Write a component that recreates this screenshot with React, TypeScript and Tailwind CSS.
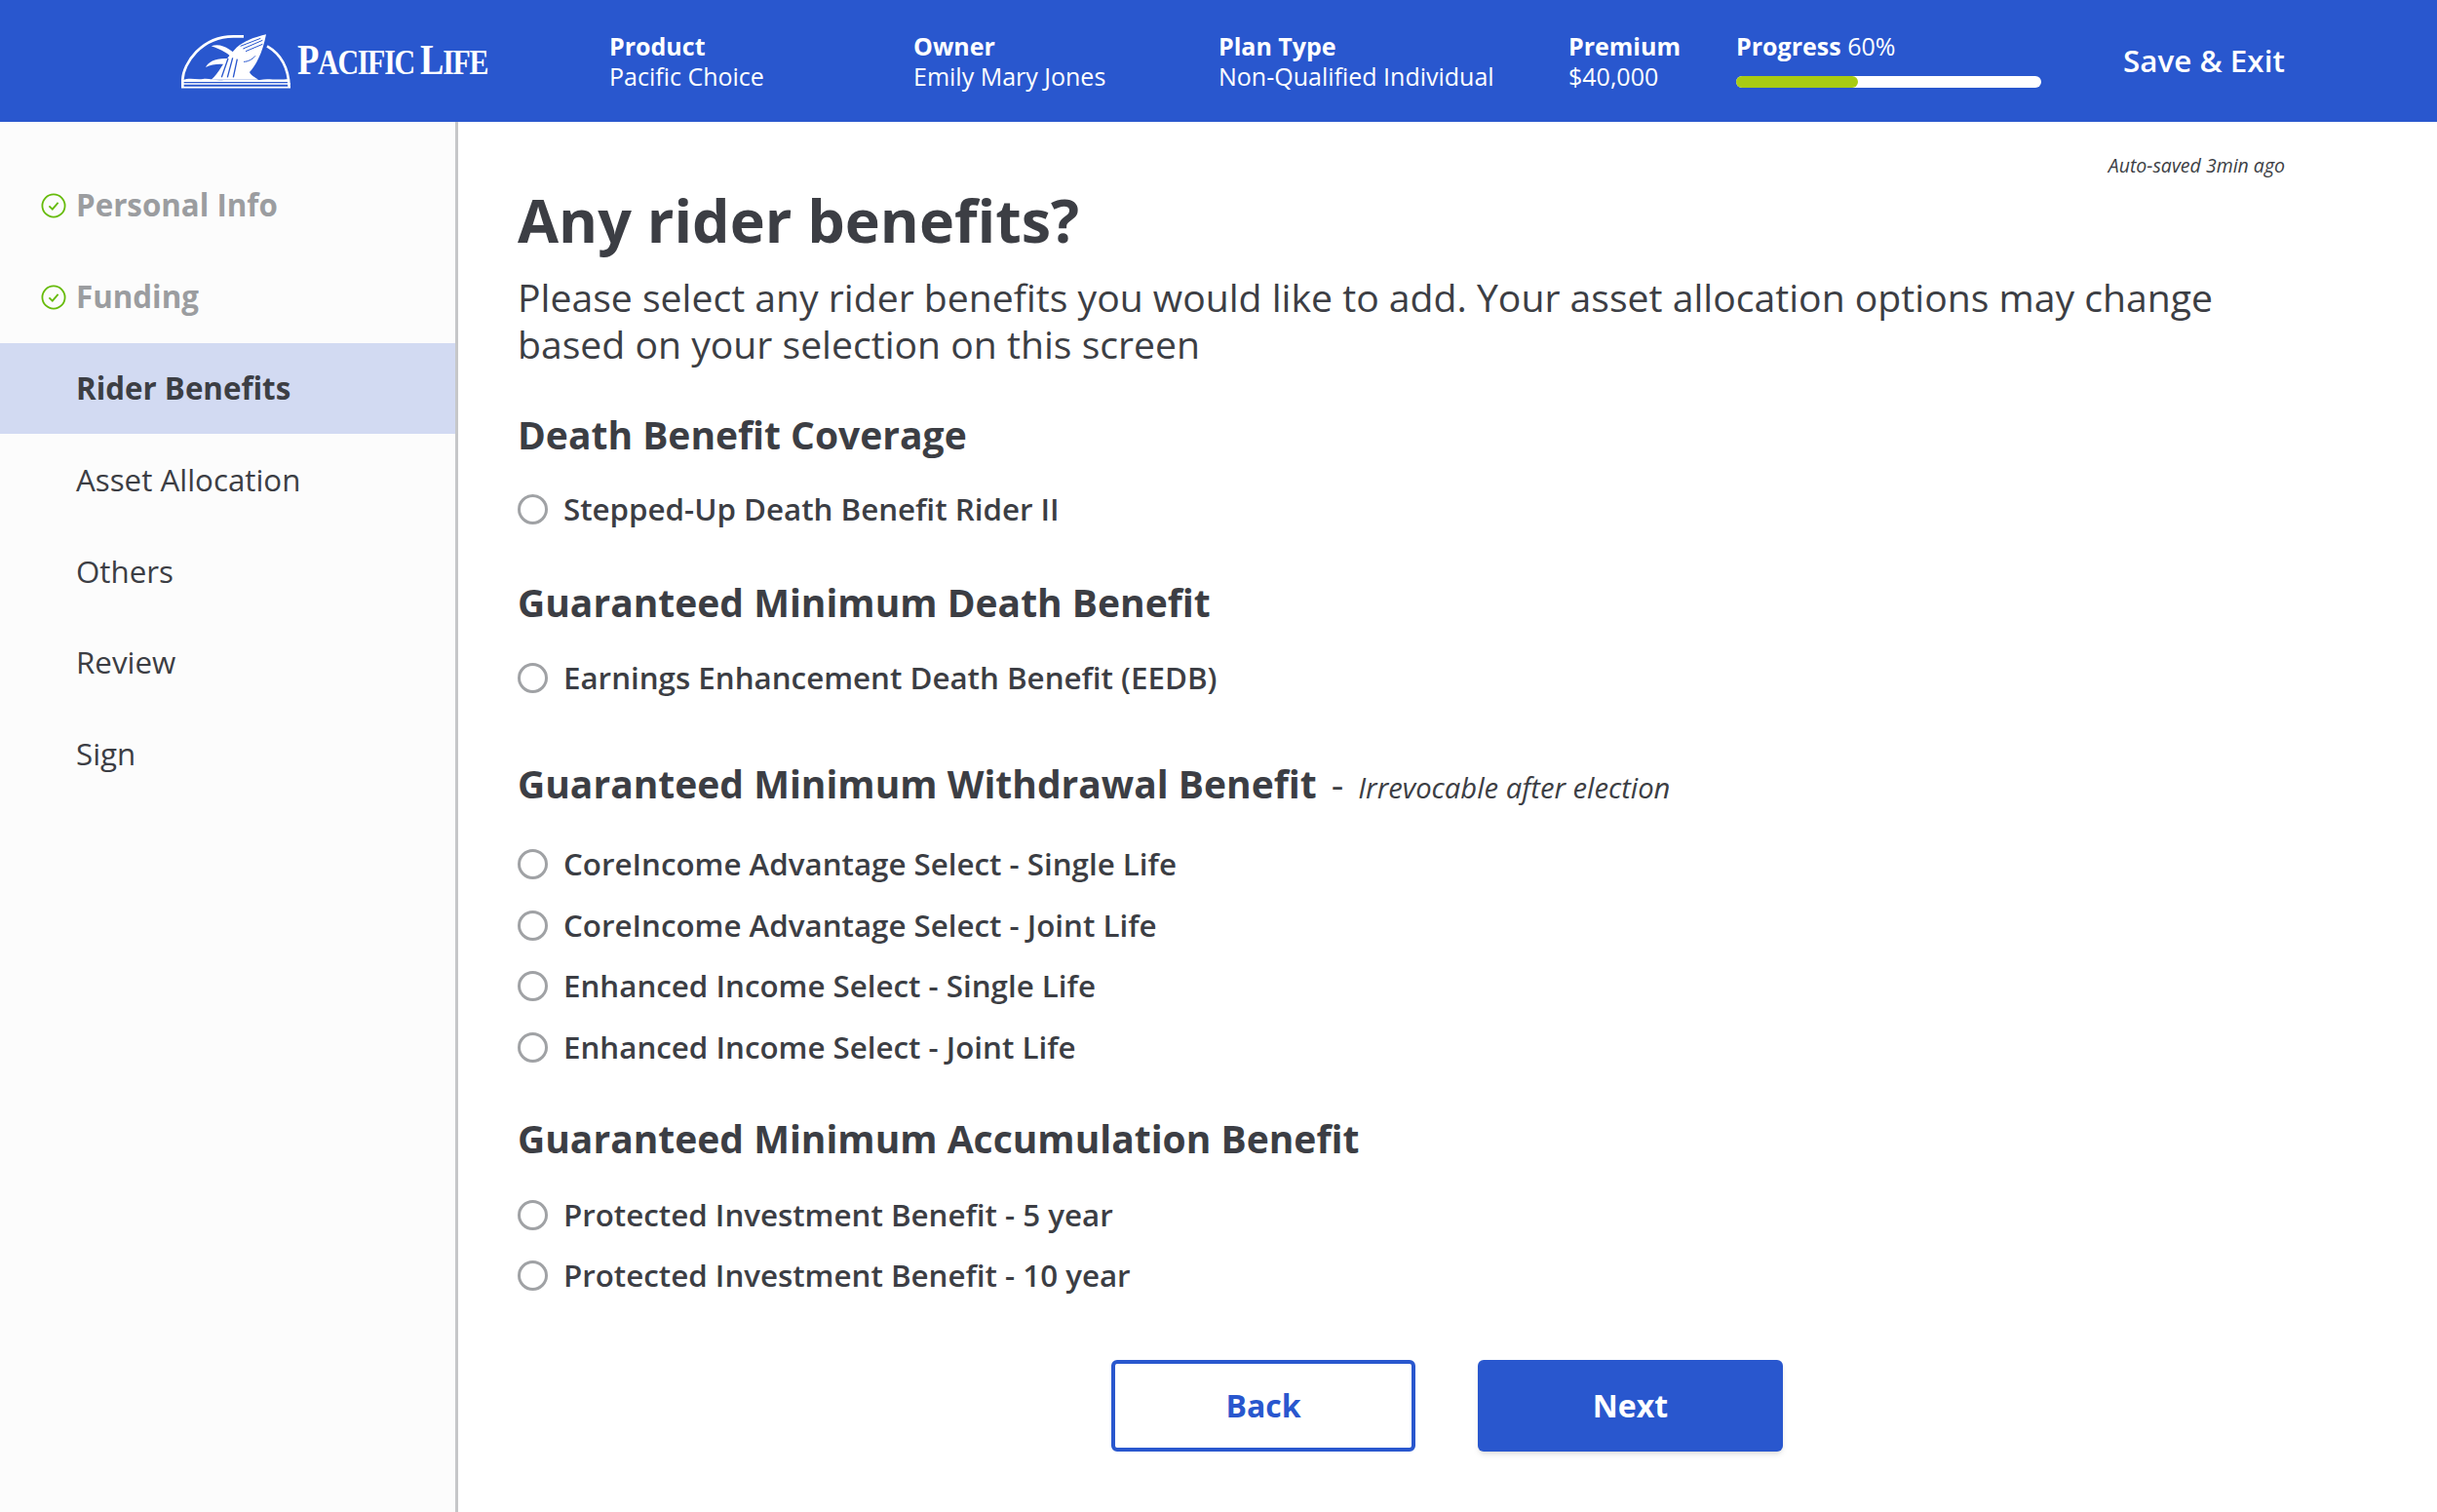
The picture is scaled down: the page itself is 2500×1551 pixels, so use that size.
import React from "react";

const navDone = ["Personal Info", "Funding"];
const navTodo = ["Asset Allocation", "Others", "Review", "Sign"];

const headerInfo = [
  { label: "Product", value: "Pacific Choice", width: "w-[312px]" },
  { label: "Owner", value: "Emily Mary Jones", width: "w-[313px]" },
  { label: "Plan Type", value: "Non-Qualified Individual", width: "w-[359px]" },
  { label: "Premium", value: "$40,000", width: "w-[172px]" },
];

const sections = [
  {
    title: "Death Benefit Coverage",
    sectionClass: "",
    listClass: "mt-[24px]",
    options: ["Stepped-Up Death Benefit Rider II"],
  },
  {
    title: "Guaranteed Minimum Death Benefit",
    sectionClass: "mt-[42px]",
    listClass: "mt-[24px]",
    options: ["Earnings Enhancement Death Benefit (EEDB)"],
  },
  {
    title: "Guaranteed Minimum Withdrawal Benefit",
    note: "Irrevocable after election",
    sectionClass: "mt-[55.5px]",
    listClass: "mt-[29.5px]",
    options: [
      "CoreIncome Advantage Select - Single Life",
      "CoreIncome Advantage Select - Joint Life",
      "Enhanced Income Select - Single Life",
      "Enhanced Income Select - Joint Life",
    ],
  },
  {
    title: "Guaranteed Minimum Accumulation Benefit",
    sectionClass: "mt-[40.5px]",
    listClass: "mt-[25px]",
    options: ["Protected Investment Benefit - 5 year", "Protected Investment Benefit - 10 year"],
  },
];

function Logo() {
  return (
    <div className="flex items-center w-[314px] h-[56px] shrink-0">
      <svg width="112" height="56" viewBox="108 105 336 168" fill="none" className="shrink-0">
        {/* dome */}
        <path d="M112 268 V245 C114 195 170 112 268 112 L300 112" stroke="#fff" strokeWidth="8" />
        <path d="M372 142 C412 165 438 205 440 268" stroke="#fff" strokeWidth="8" />
        {/* whale body */}
        <path
          d="M369 106 C345 112 305 122 278 146 C262 162 245 185 232 205 C222 222 212 235 200 245 L345 245 C335 238 322 232 318 222 C335 205 358 165 369 106 Z"
          fill="#fff"
        />
        {/* fins */}
        <path d="M200 142 C230 130 262 150 296 188 L272 186 C255 165 230 152 200 142 Z" fill="#fff" />
        <path d="M183 207 C190 190 215 178 250 180 L240 198 C222 196 200 198 183 207 Z" fill="#fff" />
        {/* belly and back lines */}
        <path d="M290 142 L352 118 M298 150 L358 124 M306 158 L358 136" stroke="#2957ce" strokeWidth="3" />
        <path d="M252 180 L232 238 M266 178 L250 238 M280 182 L268 238" stroke="#2957ce" strokeWidth="4" />
        <path d="M300 190 C312 190 325 184 336 172" stroke="#2957ce" strokeWidth="3" />
        {/* water */}
        <path
          d="M112 247 C135 238 150 246 175 243 C195 240 210 250 240 246 L350 246 C375 240 395 248 440 243 V252 H112 Z"
          fill="#fff"
        />
        <path d="M108 258 H444 M108 269 H444" stroke="#fff" strokeWidth="5" />
      </svg>
      <div
        className="ml-[7px] text-white font-bold whitespace-nowrap tracking-[-1.5px] leading-none mt-[-1px] origin-left scale-x-[.83]"
        style={{ fontFamily: '"Liberation Serif", serif' }}
      >
        <span className="text-[44px]">P</span>
        <span className="text-[36px]">ACIFIC </span>
        <span className="text-[44px]">L</span>
        <span className="text-[36px]">IFE</span>
      </div>
    </div>
  );
}

function CheckIcon() {
  return (
    <svg width="26" height="26" viewBox="0 0 26 26" fill="none" className="shrink-0">
      <circle cx="13" cy="13" r="11.6" stroke="#66bb0a" strokeWidth="1.8" />
      <path d="M8.4 13.4 L11.8 16.6 L17.6 9.8" stroke="#66bb0a" strokeWidth="1.8" />
    </svg>
  );
}

function Sidebar() {
  return (
    <aside className="w-[470px] shrink-0 border-r-[3px] border-[#c6c7c9] bg-[#fcfcfc] pt-[39px] text-[31.3px]">
      {navDone.map((item) => (
        <div key={item} className="flex items-center h-[93.8px] pl-[42px] gap-[10px] font-bold text-[#9b9da0]">
          <CheckIcon />
          <span>{item}</span>
        </div>
      ))}
      <div className="flex items-center h-[93.8px] pl-[78px] font-bold text-[#3c3e44] bg-[#d2daf2]">Rider Benefits</div>
      {navTodo.map((item) => (
        <div key={item} className="flex items-center h-[93.8px] pl-[78px] text-[#3c3e44]">
          {item}
        </div>
      ))}
    </aside>
  );
}

export default function App() {
  return (
    <div
      className="w-[2500px] h-[1551px] overflow-hidden bg-white flex flex-col text-[#3c3e44]"
      style={{ fontFamily: '"Open Sans", sans-serif' }}
    >
      {/* header */}
      <header className="h-[125px] shrink-0 bg-[#2957ce] flex items-center pl-[186px] text-white">
        <div className="w-[439px] shrink-0">
          <Logo />
        </div>
        {headerInfo.map((info) => (
          <div key={info.label} className={`${info.width} shrink-0 text-[25px] leading-[31px]`}>
            <div className="font-bold">{info.label}</div>
            <div>{info.value}</div>
          </div>
        ))}
        <div className="w-[397px] shrink-0">
          <div className="text-[25px] leading-[31px] mt-[-4px]">
            <span className="font-bold">Progress</span> <span className="font-normal">60%</span>
          </div>
          <div className="mt-[15px] w-[313px] h-[12px] rounded-full bg-white">
            <div className="w-[125px] h-full rounded-full bg-[#a8cc12]" />
          </div>
        </div>
        <div className="text-[31.4px] font-semibold whitespace-nowrap mt-[-1px]">Save &amp; Exit</div>
      </header>

      <div className="flex flex-1 min-h-0">
        <Sidebar />
        <main className="flex-1 pl-[61px] pr-[156px] pt-[30px]">
          <div className="text-right italic text-[19.5px] leading-[30px]">Auto-saved 3min ago</div>
          <h1 className="mt-[5px] text-[61px] leading-[72px] font-bold">Any rider benefits?</h1>
          <p className="mt-[19px] text-[39.15px] leading-[47.5px]">
            Please select any rider benefits you would like to add. Your asset allocation options may change based on
            your selection on this screen
          </p>
          <div className="mt-[47.5px]">
            {sections.map((section) => (
              <section key={section.title} className={section.sectionClass}>
                <h2 className="flex items-baseline text-[39px] leading-[44px] font-bold">
                  <span>{section.title}</span>
                  {section.note && (
                    <>
                      <span className="font-medium ml-[15px]">-</span>
                      <span className="italic font-normal text-[29.2px] leading-none ml-[15px]">{section.note}</span>
                    </>
                  )}
                </h2>
                <div className={section.listClass}>
                  {section.options.map((option) => (
                    <div key={option} className="flex items-center h-[62.5px] gap-[16px]">
                      <span className="w-[31px] h-[31px] rounded-full border-[3px] border-[#a0a2a5] bg-white shrink-0" />
                      <span className="text-[31.3px] font-semibold">{option}</span>
                    </div>
                  ))}
                </div>
              </section>
            ))}
          </div>
          <div className="mt-[55px] ml-[609px] flex gap-[64px] text-[32px] font-bold">
            <button className="w-[312px] h-[94px] rounded-[6px] border-[4px] border-[#2957ce] bg-white text-[#2957ce]">
              Back
            </button>
            <button className="w-[313px] h-[94px] rounded-[6px] bg-[#2957ce] text-white shadow-md">Next</button>
          </div>
        </main>
      </div>
    </div>
  );
}
